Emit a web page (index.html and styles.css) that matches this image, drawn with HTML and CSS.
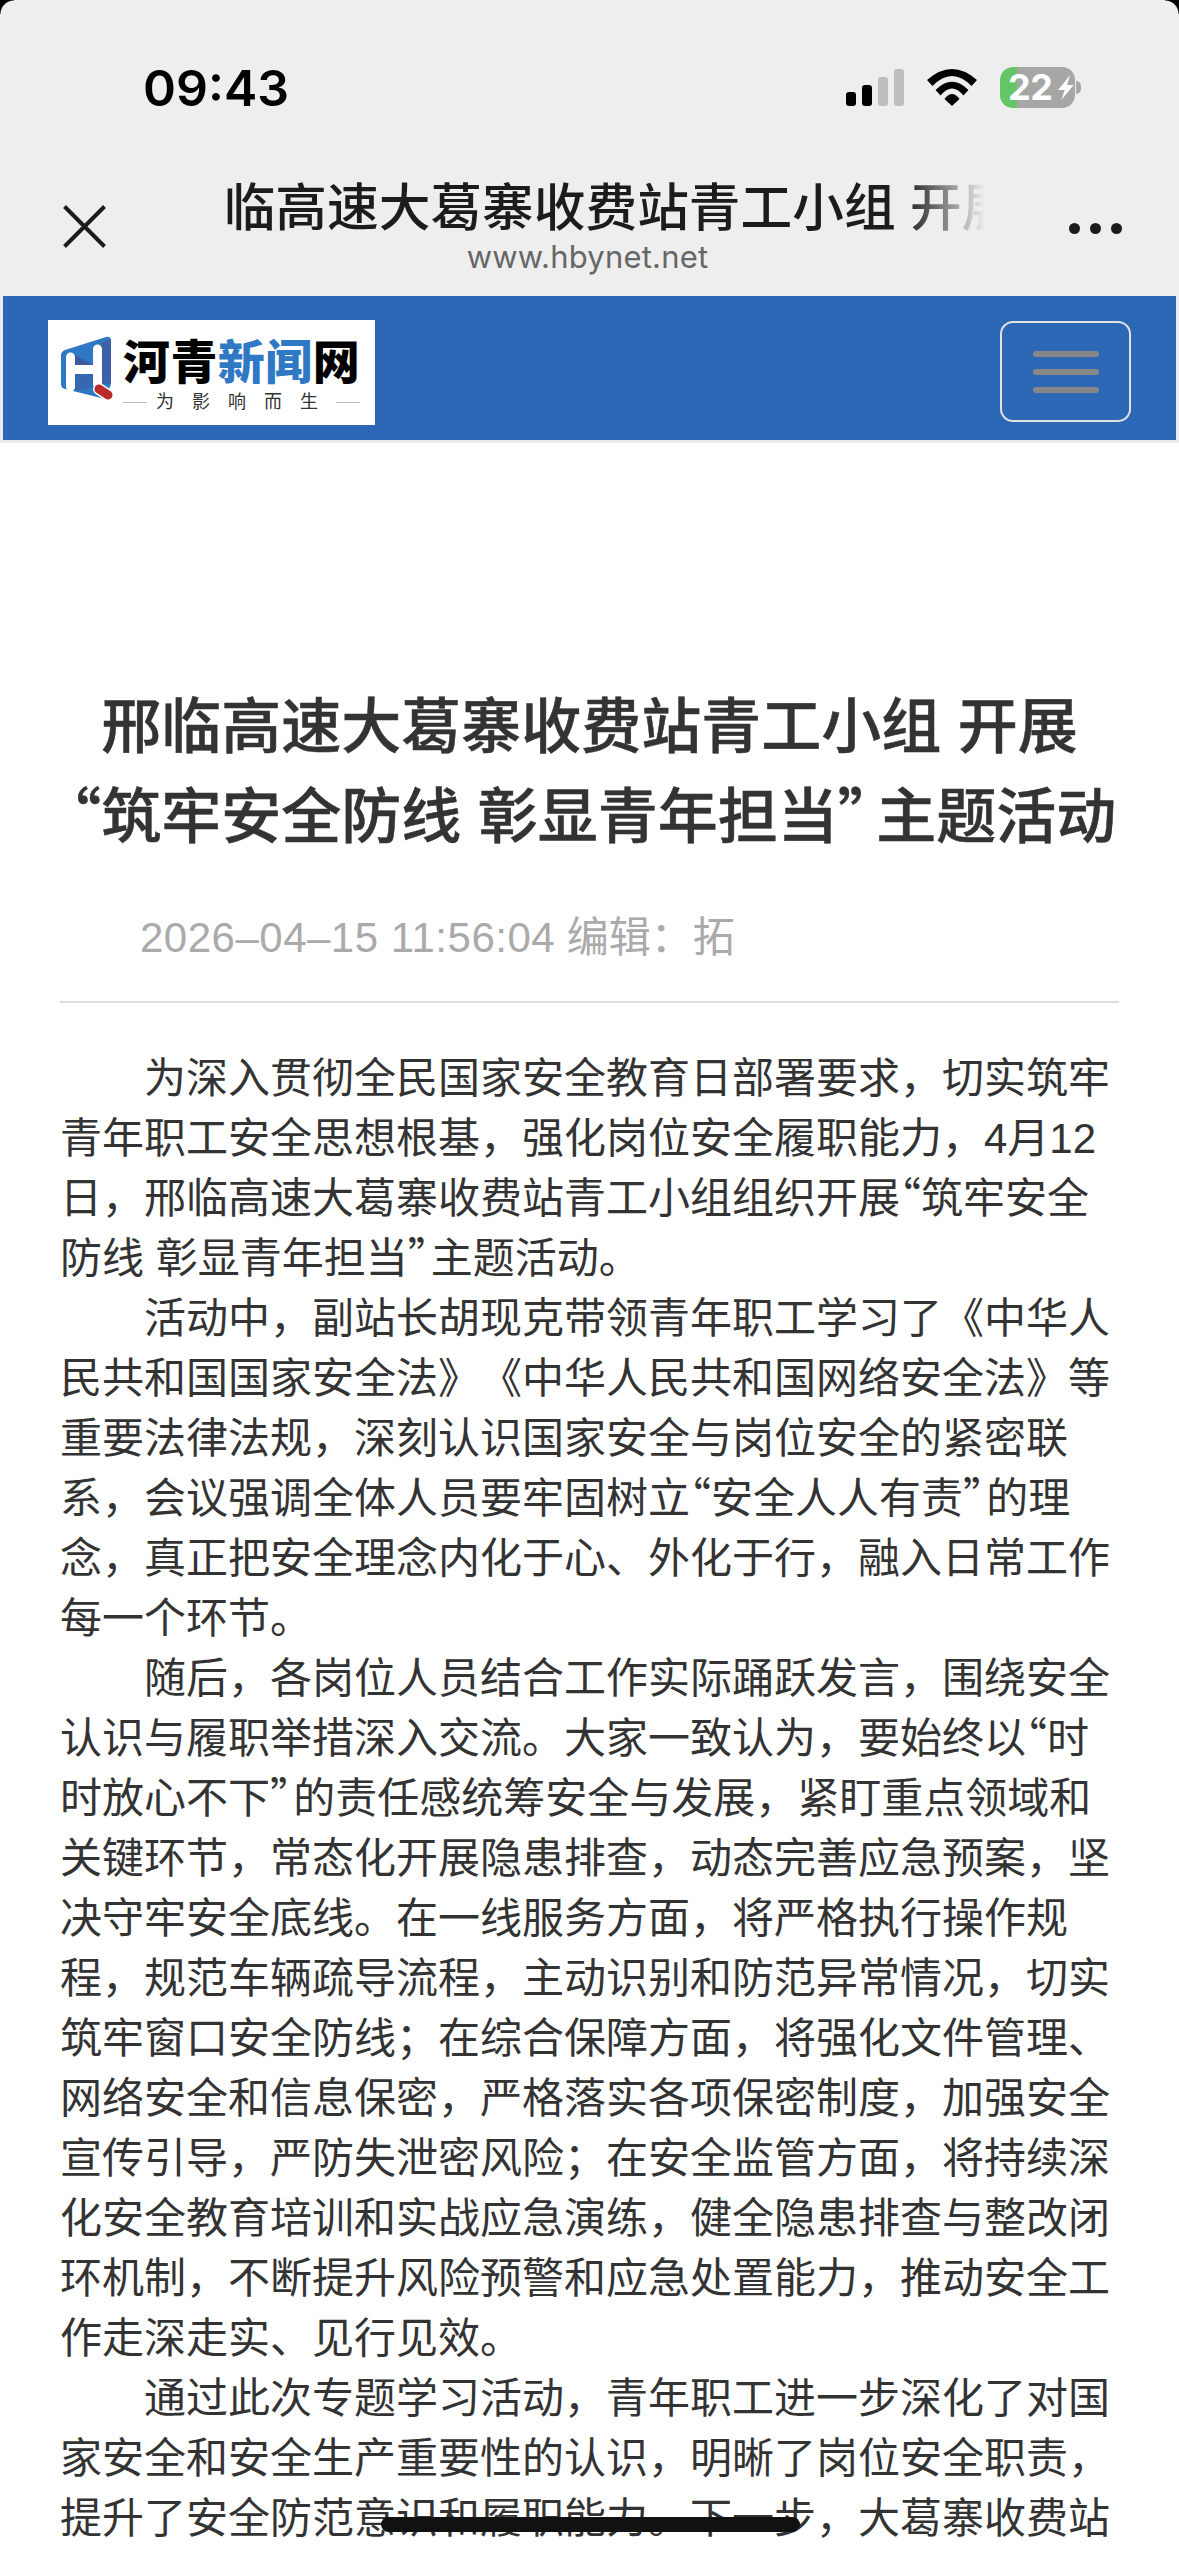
FILE: index.html
```html
<!DOCTYPE html>
<html lang="zh-CN">
<head>
  <meta charset="UTF-8">
  <meta name="viewport" content="width=device-width, initial-scale=1.0">
  <title>邢临高速大葛寨收费站青工小组 开展“筑牢安全防线 彰显青年担当”主题活动</title>
  <link rel="stylesheet" href="styles.css">
</head>
<body>
  <div class="page">
    <div class="corner corner-left"></div>
    <div class="corner corner-right"></div>

    <!-- browser chrome -->
    <div class="chrome">
      <div class="status">
        <span class="time">09:43</span>
        <div class="status-icons">
          <div class="signal">
            <i class="bar bar1"></i><i class="bar bar2"></i><i class="bar bar3 off"></i><i class="bar bar4 off"></i>
          </div>
          <svg class="wifi" width="50" height="37" viewBox="0 0 50 37">
            <path d="M0 11 Q25 -11 50 11 L44.5 17 Q25 -3 5.5 17 Z"/>
            <path d="M8.5 21 Q25 4.4 41.5 21 L36.5 26.5 Q25 12.5 13.5 26.5 Z"/>
            <path d="M17.5 30 Q25 20 32.5 30 L25 37 Z"/>
          </svg>
          <div class="battery">
            <div class="battery-body">
              <span class="battery-num">22</span>
              <svg class="bolt" width="16" height="25" viewBox="0 0 16 25">
                <path d="M12.3 0 L0 15 L6.7 15 L3.3 25 L15.7 10 L9 10 Z"/>
              </svg>
            </div>
            <i class="battery-nub"></i>
          </div>
        </div>
      </div>
      <div class="nav">
        <svg class="close" width="43" height="43" viewBox="0 0 43 43">
          <path d="M1.5 1.5 L41.5 41.5 M41.5 1.5 L1.5 41.5"/>
        </svg>
        <div class="nav-title">
          <div class="tab-title"><span>邢临高速大葛寨收费站青工小组 开展“筑牢安全防线</span></div>
          <div class="tab-url">www.hbynet.net</div>
        </div>
        <div class="dots"><i></i><i></i><i></i></div>
      </div>
    </div>

    <!-- site header -->
    <div class="site-header">
      <div class="site-bar">
        <div class="logo">
          <svg class="logo-mark" width="66" height="80" viewBox="0 0 66 80">
            <path fill="#2f78c4" d="M10 30 Q10 27 14 25 L55 12 Q60 11 60 16 L60 59 L54 74 L14 64 Q10 63 10 59 Z"/>
            <path fill="#3b62a8" d="M50 18 L60 14 L60 58 L50 60 Z"/>
            <path fill="#3a5a9e" d="M24 30 L42 40 L24 40 Z"/>
            <path fill="#3568b0" d="M24 49 L42 49 L42 62 L24 66 Z"/>
            <path fill="none" stroke="#fff" stroke-width="9" stroke-linecap="round" d="M19.5 32 V62 M46.5 24 V59 M19.5 44.5 H46.5"/>
            <path fill="none" stroke="#fff" stroke-width="12" stroke-linecap="round" d="M48 64 L57 70"/>
            <path fill="none" stroke="#b92a28" stroke-width="9" stroke-linecap="round" d="M48 64 L57 70"/>
          </svg>
          <div class="logo-text">
            <div class="logo-name">河青<em>新闻</em>网</div>
            <div class="logo-slogan"><i></i><span>为影响而生</span><i></i></div>
          </div>
        </div>
        <div class="menu-btn"><i></i><i></i><i></i></div>
      </div>
    </div>

    <!-- article -->
    <div class="article">
      <h1>邢临高速大葛寨收费站青工小组 开展<span class="ql">“</span>筑牢安全防线 彰显青年担当<span class="qr">”</span>主题活动</h1>
      <div class="meta"><span class="meta-date">2026–04–15 11:56:04</span> 编辑：拓</div>
      <div class="content">
        <p>为深入贯彻全民国家安全教育日部署要求，切实筑牢青年职工安全思想根基，强化岗位安全履职能力，4月12日，邢临高速大葛寨收费站青工小组组织开展<span class="ql">“</span>筑牢安全防线 彰显青年担当<span class="qr">”</span>主题活动。</p>
        <p>活动中，副站长胡现克带领青年职工学习了《中华人民共和国国家安全法》《中华人民共和国网络安全法》等重要法律法规，深刻认识国家安全与岗位安全的紧密联系，会议强调全体人员要牢固树立<span class="ql">“</span>安全人人有责<span class="qr">”</span>的理念，真正把安全理念内化于心、外化于行，融入日常工作每一个环节。</p>
        <p>随后，各岗位人员结合工作实际踊跃发言，围绕安全认识与履职举措深入交流。大家一致认为，要始终以<span class="ql">“</span>时时放心不下<span class="qr">”</span>的责任感统筹安全与发展，紧盯重点领域和关键环节，常态化开展隐患排查，动态完善应急预案，坚决守牢安全底线。在一线服务方面，将严格执行操作规程，规范车辆疏导流程，主动识别和防范异常情况，切实筑牢窗口安全防线；在综合保障方面，将强化文件管理、网络安全和信息保密，严格落实各项保密制度，加强安全宣传引导，严防失泄密风险；在安全监管方面，将持续深化安全教育培训和实战应急演练，健全隐患排查与整改闭环机制，不断提升风险预警和应急处置能力，推动安全工作走深走实、见行见效。</p>
        <p>通过此次专题学习活动，青年职工进一步深化了对国家安全和安全生产重要性的认识，明晰了岗位安全职责，提升了安全防范意识和履职能力。下一步，大葛寨收费站</p>
      </div>
    </div>

    <div class="home-bar"></div>
  </div>
</body>
</html>
```

FILE: styles.css
```css
html, body {
  margin: 0;
  padding: 0;
  background: #fff;
}
.page {
  position: relative;
  width: 1179px;
  height: 2556px;
  overflow: hidden;
  font-family: "Liberation Sans", "Noto Sans CJK SC", sans-serif;
  text-spacing-trim: space-all;
}
.corner {
  position: absolute;
  top: 0;
  width: 14px;
  height: 14px;
}
.corner-left {
  left: 0;
  background: radial-gradient(circle at 100% 100%, transparent 13px, #000 14px);
}
.corner-right {
  right: 0;
  background: radial-gradient(circle at 0 100%, transparent 13px, #000 14px);
}

/* browser chrome */
.chrome {
  background: #eeeeee;
  height: 233px;
  padding-top: 60px;
}
.status {
  display: flex;
  justify-content: space-between;
  align-items: center;
  height: 55px;
  margin-bottom: 63px;
  padding: 0 98px 0 143px;
}
.time {
  font-family: Inter, sans-serif;
  font-size: 50px;
  font-weight: 600;
  color: #000;
}
.status-icons {
  display: flex;
  align-items: center;
}
.signal {
  display: flex;
  align-items: flex-end;
  gap: 6px;
  height: 37px;
}
.bar {
  display: block;
  width: 10px;
  border-radius: 3px;
  background: #000;
}
.bar.off { background: #bdbdbd; }
.bar1 { height: 14px; }
.bar2 { height: 21px; }
.bar3 { height: 29px; }
.bar4 { height: 37px; }
.wifi {
  display: block;
  margin-left: 23px;
  fill: #000;
}
.battery {
  display: flex;
  align-items: center;
  margin-left: 23px;
}
.battery-body {
  display: flex;
  align-items: center;
  box-sizing: border-box;
  width: 75px;
  height: 41px;
  padding-left: 8px;
  border-radius: 13px;
  background: linear-gradient(to right, #65c466 17px, #a6a6a6 17px);
}
.battery-num {
  font-family: Inter, sans-serif;
  font-size: 36px;
  font-weight: 700;
  line-height: 41px;
  letter-spacing: -0.5px;
  color: #fff;
}
.bolt {
  display: block;
  margin-left: 6px;
  fill: #fff;
}
.battery-nub {
  display: block;
  width: 5px;
  height: 13px;
  margin-left: 1px;
  border-radius: 0 7px 7px 0;
  background: #a6a6a6;
}
.nav {
  display: flex;
  align-items: center;
  height: 100px;
  padding-left: 63px;
}
.close {
  display: block;
  flex: none;
  margin-bottom: 4px;
  fill: none;
  stroke: #1c1c1c;
  stroke-width: 4;
}
.nav-title {
  flex: none;
  width: 722px;
  margin-left: 119px;
}
.tab-title {
  width: 760px;
  height: 60px;
  overflow: hidden;
  font-size: 51.7px;
  font-weight: 500;
  line-height: 60px;
  white-space: nowrap;
  color: #1c1c1c;
  -webkit-mask-image: linear-gradient(to right, #000 680px, transparent 100%);
  mask-image: linear-gradient(to right, #000 680px, transparent 100%);
}
.tab-title span {
  display: block;
  margin-left: -53px;
}
.tab-url {
  height: 40px;
  margin-left: 3px;
  font-family: Inter, sans-serif;
  font-size: 31px;
  line-height: 38px;
  letter-spacing: 0.2px;
  text-align: center;
  color: #666;
}
.dots {
  display: flex;
  gap: 10px;
  margin-left: 122px;
}
.dots i {
  display: block;
  width: 11px;
  height: 11px;
  border-radius: 50%;
  background: #1c1c1c;
}

/* site header */
.site-header {
  padding: 3px;
  background: #ececec;
}
.site-bar {
  display: flex;
  justify-content: space-between;
  align-items: flex-start;
  box-sizing: border-box;
  height: 144px;
  padding: 24px 45px 0;
  background: #2d68b7;
}
.logo {
  display: flex;
  box-sizing: border-box;
  width: 327px;
  height: 105px;
  background: #fff;
}
.logo-mark {
  display: block;
  flex: none;
  margin: 5px 0 0 3px;
}
.logo-text {
  margin-left: 6px;
}
.logo-name {
  margin-top: 15px;
  height: 55px;
  font-size: 47px;
  font-weight: 900;
  line-height: 55px;
  letter-spacing: 0.4px;
  white-space: nowrap;
  color: #000;
}
.logo-name em {
  font-style: normal;
  color: #2f78c4;
}
.logo-slogan {
  display: flex;
  align-items: center;
  width: 237px;
  height: 24px;
  font-size: 18px;
  line-height: 24px;
  color: #333;
}
.logo-slogan i {
  display: block;
  width: 24px;
  height: 1px;
  background: #bbb;
}
.logo-slogan span {
  flex: 1;
  padding-left: 9px;
  letter-spacing: 18px;
  white-space: nowrap;
}
.menu-btn {
  display: flex;
  flex-direction: column;
  align-items: center;
  justify-content: center;
  gap: 12px;
  box-sizing: border-box;
  width: 131px;
  height: 101px;
  margin-top: 1px;
  border: 2.5px solid #e2e2e2;
  border-radius: 13px;
}
.menu-btn i {
  display: block;
  width: 66px;
  height: 6px;
  border-radius: 3px;
  background: #888;
}

/* article */
.article {
  padding: 240px 60px 0;
}
h1 {
  margin: 0;
  font-size: 60px;
  font-weight: 500;
  line-height: 90px;
  text-align: center;
  color: #333;
  -webkit-text-stroke: 0.5px #333;
}
.meta {
  margin-top: 45px;
  padding: 0 0 33px 80px;
  border-bottom: 2px solid #ddd;
  font-size: 42px;
  line-height: 60px;
  color: #aaa;
}
.meta-date {
  letter-spacing: 0.5px;
}
.content {
  margin-top: 46px;
  font-size: 42px;
  line-height: 60px;
  color: #333;
}
.content p {
  margin: 0;
  text-indent: 2em;
}
.ql, .qr {
  font-family: "Noto Sans CJK SC", sans-serif;
  line-height: 0;
}
.ql { margin-left: -0.36em; }
.qr { margin-right: -0.36em; }
.content .ql { margin-left: -0.5em; }
.content .qr { margin-right: -0.45em; }

.home-bar {
  position: absolute;
  left: 381px;
  top: 2517px;
  width: 419px;
  height: 15px;
  border-radius: 8px;
  background: #111;
}
```
